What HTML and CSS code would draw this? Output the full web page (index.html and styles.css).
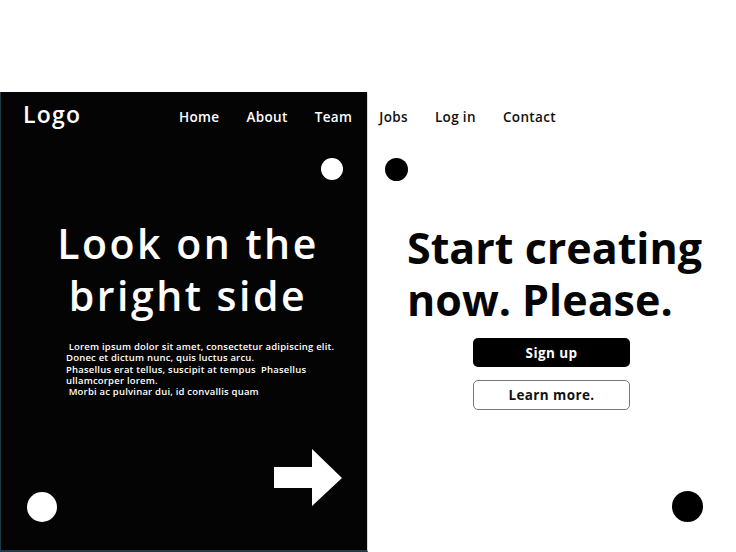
FILE: index.html
```html
<!DOCTYPE html>
<html lang="en">
<head>
<meta charset="utf-8">
<title>Look on the bright side</title>
<link rel="stylesheet" href="styles.css">
</head>
<body>
<div class="page">
  <div class="top-space"></div>
  <section class="hero">
    <div class="panel-bg"></div>
    <nav class="nav">
      <div class="logo">Logo</div>
      <ul class="links">
        <li>Home</li>
        <li>About</li>
        <li>Team</li>
        <li>Jobs</li>
        <li>Log in</li>
        <li>Contact</li>
      </ul>
    </nav>
    <div class="left">
      <h1 class="left-title">Look on the<br>bright side</h1>
      <p class="lorem">&nbsp;Lorem ipsum dolor sit amet, consectetur adipiscing elit.<br>Donec et dictum nunc, quis luctus arcu.<br>Phasellus erat tellus, suscipit at tempus&nbsp; Phasellus<br>ullamcorper lorem.<br>&nbsp;Morbi ac pulvinar dui, id convallis quam</p>
      <div class="arrow-row">
        <svg class="arrow" width="68" height="58" viewBox="0 0 68 58"><path d="M0 18 H38 V0 L68 29 L38 57 V39 H0 Z" fill="#fff"/></svg>
      </div>
    </div>
    <div class="right">
      <h2 class="right-title">Start creating<br>now. Please.</h2>
      <div class="buttons">
        <button class="btn btn-dark">Sign up</button>
        <button class="btn btn-light">Learn more.</button>
      </div>
    </div>
    <span class="dot dot-white dot-a"></span>
    <span class="dot dot-black dot-b"></span>
    <span class="dot dot-white dot-c"></span>
    <span class="dot dot-black dot-d"></span>
  </section>
</div>
</body>
</html>
```
FILE: styles.css
```css
* { box-sizing: border-box; }
html, body { margin: 0; padding: 0; background: #fff; }
body {
  font-family: "Open Sans", "Liberation Sans", sans-serif;
  width: 736px;
  height: 552px;
  overflow: hidden;
}
.page { display: flex; flex-direction: column; height: 552px; }
.top-space { height: 92px; flex: none; }
.hero {
  position: relative;
  flex: 1;
  display: grid;
  grid-template-columns: 368px 1fr;
  grid-template-rows: 48px 1fr;
}
.panel-bg {
  grid-column: 1;
  grid-row: 1 / 3;
  background: #040404;
  border-left: 1px solid #1f3b4a;
  border-right: 1px solid #bfe3ee;
  border-bottom: 2px solid #1f3b4a;
}
.nav {
  grid-column: 1 / 3;
  grid-row: 1;
  display: flex;
  align-items: center;
  padding-left: 23px;
}
.logo {
  color: #fff;
  font-size: 23px;
  font-weight: 600;
  letter-spacing: 1.2px;
  margin-top: -4px;
  width: 156px;
}
.links {
  display: flex;
  gap: 27px;
  margin: 2px 0 0;
  padding: 0;
  list-style: none;
  font-size: 13.5px;
  font-weight: 600;
  letter-spacing: 0.35px;
}
.links li:nth-child(-n+3) { color: #fff; }
.links li:nth-child(n+4) { color: #111; }
.left {
  grid-column: 1;
  grid-row: 2;
  display: flex;
  flex-direction: column;
  padding-top: 77px;
}
.left-title {
  margin: 0;
  color: #fff;
  text-align: center;
  font-size: 41px;
  font-weight: 600;
  letter-spacing: 2.5px;
  line-height: 52px;
  padding-left: 8px;
}
.lorem {
  margin: 20px 0 0;
  padding-left: 66px;
  color: #fff;
  font-size: 9.5px;
  font-weight: 600;
  letter-spacing: 0.2px;
  line-height: 11.3px;
}
.arrow-row {
  display: flex;
  justify-content: flex-end;
  padding-right: 26px;
  margin-top: 52px;
}
.right {
  grid-column: 2;
  grid-row: 2;
  display: flex;
  flex-direction: column;
  padding-left: 39px;
  padding-top: 82px;
}
.right-title {
  margin: 0;
  color: #050505;
  font-size: 43px;
  font-weight: 700;
  line-height: 52px;
}
.buttons {
  display: flex;
  flex-direction: column;
  gap: 13px;
  margin-top: 12px;
  margin-left: 66px;
  width: 157px;
}
.btn {
  font-family: inherit;
  font-size: 13.5px;
  font-weight: 700;
  letter-spacing: 0.4px;
  height: 30px;
  border-radius: 5px;
  cursor: pointer;
}
.btn-dark { background: #000; color: #fff; border: none; height: 29px; }
.btn-light { background: #fff; color: #111; border: 1px solid #777; }
.dot { position: absolute; border-radius: 50%; }
.dot-white { background: #fff; }
.dot-black { background: #000; }
.dot-a { width: 22px; height: 22px; left: 321px; top: 66px; }
.dot-b { width: 23px; height: 23px; left: 385px; top: 66px; }
.dot-c { width: 30px; height: 30px; left: 27px; top: 400px; }
.dot-d { width: 31px; height: 31px; left: 672px; top: 399px; }
```
